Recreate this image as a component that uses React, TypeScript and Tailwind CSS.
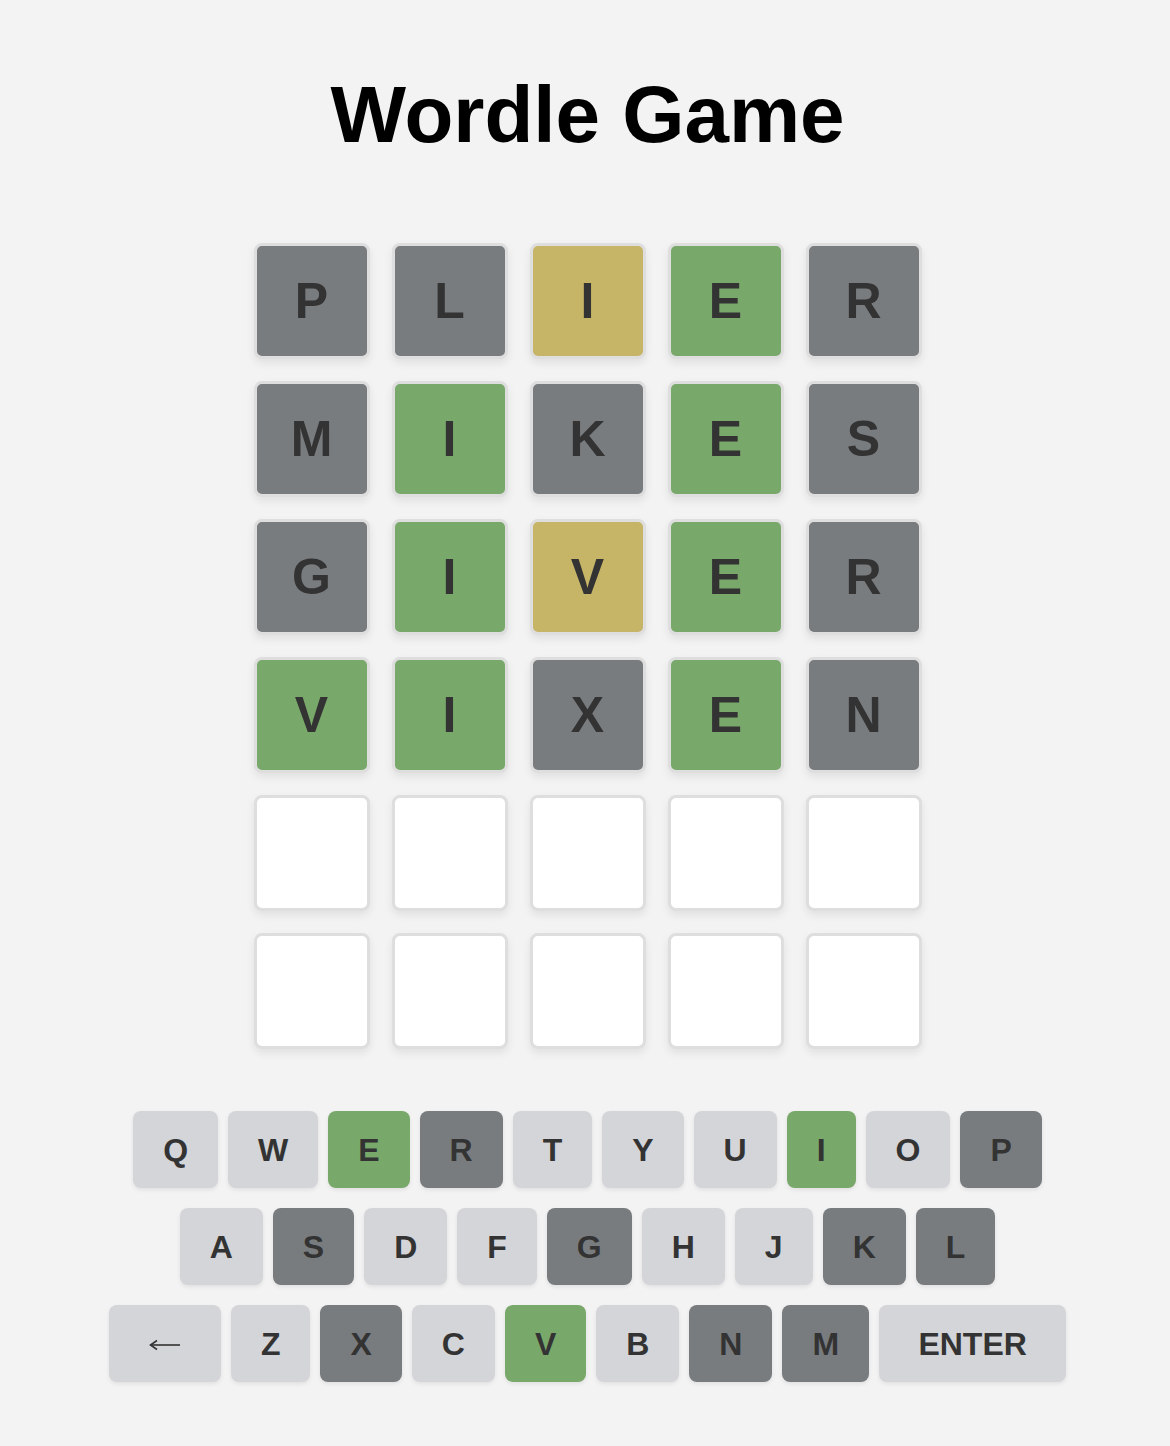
import React from 'react';

type State = 'correct' | 'present' | 'absent' | 'empty';

const guesses: { letter: string; state: State }[][] = [
  [
    { letter: 'P', state: 'absent' },
    { letter: 'L', state: 'absent' },
    { letter: 'I', state: 'present' },
    { letter: 'E', state: 'correct' },
    { letter: 'R', state: 'absent' },
  ],
  [
    { letter: 'M', state: 'absent' },
    { letter: 'I', state: 'correct' },
    { letter: 'K', state: 'absent' },
    { letter: 'E', state: 'correct' },
    { letter: 'S', state: 'absent' },
  ],
  [
    { letter: 'G', state: 'absent' },
    { letter: 'I', state: 'correct' },
    { letter: 'V', state: 'present' },
    { letter: 'E', state: 'correct' },
    { letter: 'R', state: 'absent' },
  ],
  [
    { letter: 'V', state: 'correct' },
    { letter: 'I', state: 'correct' },
    { letter: 'X', state: 'absent' },
    { letter: 'E', state: 'correct' },
    { letter: 'N', state: 'absent' },
  ],
];

const tileColors: Record<State, string> = {
  correct: 'bg-[#79a86b]',
  present: 'bg-[#c6b566]',
  absent: 'bg-[#787c7f]',
  empty: 'bg-white',
};

const keyColors: Record<State, string> = {
  correct: 'bg-[#79a86b]',
  present: 'bg-[#c6b566]',
  absent: 'bg-[#787c7f]',
  empty: 'bg-[#d4d5d9]',
};

const keyRows = [
  ['Q', 'W', 'E', 'R', 'T', 'Y', 'U', 'I', 'O', 'P'],
  ['A', 'S', 'D', 'F', 'G', 'H', 'J', 'K', 'L'],
  ['BACK', 'Z', 'X', 'C', 'V', 'B', 'N', 'M', 'ENTER'],
];

const keyStates: Record<string, State> = {
  E: 'correct',
  I: 'correct',
  V: 'correct',
  R: 'absent',
  P: 'absent',
  S: 'absent',
  G: 'absent',
  K: 'absent',
  L: 'absent',
  X: 'absent',
  N: 'absent',
  M: 'absent',
};

const Tile: React.FC<{ letter: string; state: State }> = ({ letter, state }) => (
  <div
    className={`w-[116px] h-[116px] rounded-lg border-[3px] border-[#dedede] shadow-[0_4px_8px_rgba(0,0,0,0.08)] flex items-center justify-center text-[50px] font-bold text-[#333] ${tileColors[state]}`}
  >
    {letter}
  </div>
);

// thin back arrow like the ← glyph
const BackArrow = () => (
  <svg width="32" height="12" viewBox="0 0 32 12" fill="none" stroke="#333" strokeWidth="1.6" aria-label="←">
    <path d="M1.5 6H31" />
    <path d="M8 1.5L1.5 6L8 10.5" strokeLinejoin="miter" />
  </svg>
);

const Key: React.FC<{ label: string }> = ({ label }) => {
  const state = keyStates[label] ?? 'empty';
  let width = 'px-[30px]';
  if (label === 'ENTER') width = 'w-[187px]';
  if (label === 'BACK') width = 'w-[112px]';
  return (
    <button
      className={`h-[77px] ${width} rounded-lg flex items-center justify-center text-[32px] font-bold text-[#333] shadow-[0_2px_4px_rgba(0,0,0,0.08)] ${keyColors[state]}`}
    >
      {label === 'BACK' ? (
        <span className="pt-[2px]">
          <BackArrow />
        </span>
      ) : (
        label
      )}
    </button>
  );
};

export default function App() {
  const rows = [...guesses];
  while (rows.length < 6) {
    rows.push(Array.from({ length: 5 }, () => ({ letter: '', state: 'empty' as State })));
  }

  return (
    <div
      className="min-h-[1446px] bg-[#f3f3f3] flex flex-col items-center pl-[5px] pt-[69px]"
      style={{ fontFamily: '"Liberation Sans", Arial, sans-serif' }}
    >
      <h1 className="text-[80px] leading-[92px] font-bold text-black">Wordle Game</h1>

      {/* Board */}
      <div className="mt-[82px] flex flex-col gap-[22px]">
        {rows.map((row, r) => (
          <div key={r} className="flex gap-[22px]">
            {row.map((tile, c) => (
              <Tile key={c} letter={tile.letter} state={tile.state} />
            ))}
          </div>
        ))}
      </div>

      {/* Keyboard */}
      <div className="mt-[62px] flex flex-col items-center gap-[20px]">
        {keyRows.map((row, i) => (
          <div key={i} className="flex gap-[10px]">
            {row.map((k) => (
              <Key key={k} label={k} />
            ))}
          </div>
        ))}
      </div>
    </div>
  );
}
